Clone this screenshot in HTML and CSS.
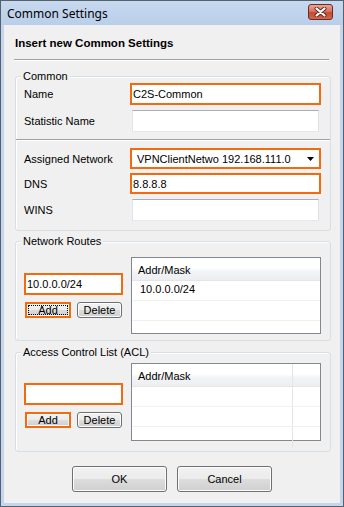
FILE: index.html
```html
<!DOCTYPE html>
<html lang="en">
<head>
    <meta charset="UTF-8">
    <meta name="viewport" content="width=device-width, initial-scale=1.0">
    <title>Common Settings</title>
    <link rel="stylesheet" href="styles.css">
</head>
<body>
    <div class="window">
        <div class="titlebar">
            <span class="title">Common Settings</span>
            <span class="close-btn">
                <svg width="13" height="10" viewBox="0 0 13 10">
                    <path d="M2.5 1.5 L10.5 8.5 M10.5 1.5 L2.5 8.5" stroke="#5a2418" stroke-width="4" stroke-linecap="round"/>
                    <path d="M2.5 1.5 L10.5 8.5 M10.5 1.5 L2.5 8.5" stroke="#ffffff" stroke-width="2.2" stroke-linecap="round"/>
                </svg>
            </span>
        </div>

        <div class="client">
            <div class="heading">Insert new Common Settings</div>
            <div class="separator"></div>

            <div class="group group-main">
                <span class="group-title">Common</span>
                <div class="row">
                    <span class="label">Name</span>
                    <div class="field field-hl">C2S-Common</div>
                </div>
                <div class="row">
                    <span class="label">Statistic Name</span>
                    <div class="field"></div>
                </div>
                <div class="divider"></div>
                <div class="row row-21">
                    <span class="label">Assigned Network</span>
                    <div class="field field-hl select">
                        <span>VPNClientNetwo 192.168.111.0</span>
                        <svg width="7" height="4" viewBox="0 0 7 4"><path d="M0 0 H7 L3.5 4 Z" fill="#000"/></svg>
                    </div>
                </div>
                <div class="row row-21 row-tight">
                    <span class="label">DNS</span>
                    <div class="field field-hl">8.8.8.8</div>
                </div>
                <div class="row">
                    <span class="label">WINS</span>
                    <div class="field"></div>
                </div>
            </div>

            <div class="group group-list group-routes">
                <span class="group-title">Network Routes</span>
                <div class="list-side">
                    <div class="entry">10.0.0.0/24</div>
                    <div class="side-buttons">
                        <button class="btn small-btn btn-hl btn-focus">Add</button>
                        <button class="btn small-btn">Delete</button>
                    </div>
                </div>
                <div class="listview">
                    <div class="lv-head"><span class="lv-col">Addr/Mask</span></div>
                    <div class="lv-row"><span class="lv-cell">10.0.0.0/24</span></div>
                    <div class="lv-row"><span class="lv-cell"></span></div>
                </div>
            </div>

            <div class="group group-list group-acl">
                <span class="group-title">Access Control List (ACL)</span>
                <div class="list-side">
                    <div class="entry"></div>
                    <div class="side-buttons">
                        <button class="btn small-btn btn-hl">Add</button>
                        <button class="btn small-btn">Delete</button>
                    </div>
                </div>
                <div class="listview">
                    <div class="lv-head"><span class="lv-col lv-col-main">Addr/Mask</span><span class="lv-col lv-col-rest"></span></div>
                    <div class="lv-row"><span class="lv-cell lv-col-main"></span><span class="lv-cell lv-col-rest"></span></div>
                    <div class="lv-row"><span class="lv-cell lv-col-main"></span><span class="lv-cell lv-col-rest"></span></div>
                    <div class="lv-row lv-row-last"><span class="lv-cell lv-col-main"></span><span class="lv-cell lv-col-rest"></span></div>
                </div>
            </div>

            <div class="actions">
                <button class="btn dialog-btn">OK</button>
                <button class="btn dialog-btn">Cancel</button>
            </div>
        </div>
    </div>
</body>
</html>
```

FILE: styles.css
```css
body {
    margin: 0;
    font-family: "Liberation Sans", Arial, sans-serif;
    font-size: 11px;
    color: #000;
    background: #fff;
}
.window {
    width: 344px;
    height: 507px;
    box-sizing: border-box;
    border: 1px solid #56616e;
    background: #c3d6ed;
    display: flex;
    flex-direction: column;
}
.titlebar {
    height: 24px;
    flex: none;
    display: flex;
    justify-content: space-between;
    padding: 0 10px 0 6px;
    background: linear-gradient(#c7d9ef, #b9cee9);
}
.title {
    font-family: "Noto Sans", sans-serif;
    font-size: 12px;
    line-height: 16px;
    margin-top: 5px;
}
.close-btn {
    width: 25px;
    height: 16px;
    margin-top: 3px;
    box-sizing: border-box;
    border: 1px solid #6e2b20;
    border-radius: 3px;
    background: linear-gradient(#e9a595 0%, #d8735f 45%, #c54a31 55%, #d3674c 100%);
    display: flex;
    align-items: center;
    justify-content: center;
}
.client {
    flex: 1;
    margin: 0 3px 3px;
    background: #f0f0f0;
}
.heading {
    padding: 11px 0 9px 11px;
    font-weight: bold;
    font-size: 11.5px;
    line-height: 14px;
}
.separator {
    margin: 0 11px 0 10px;
    border-top: 1px solid #a0a0a0;
    border-bottom: 1px solid #fff;
}
.group {
    position: relative;
    margin: 0 9px 0 11px;
    border: 1px solid #d5dfe5;
    border-radius: 3px;
    box-shadow: inset 1px 1px 0 #fff;
}
.group-title {
    position: absolute;
    top: -7px;
    left: 5px;
    padding: 0 2px;
    line-height: 13px;
    background: #f0f0f0;
}
.group-main {
    margin-top: 15px;
    padding: 6px 9px 9px 8px;
}
.row {
    display: flex;
    align-items: center;
    height: 22px;
}
.row + .row {
    margin-top: 5px;
}
.row.row-tight {
    margin-top: 4px;
}
.row-21 {
    height: 21px;
}
.label {
    width: 106px;
    flex: none;
}
.field {
    flex: 1;
    align-self: stretch;
    margin: 0 2px;
    box-sizing: border-box;
    border: 1px solid;
    border-color: #abadb3 #dbdfe6 #e3e9ef #e2e3ea;
    background: #fff;
    line-height: 18px;
}
.field-hl {
    margin: 0;
    border: 2px solid #f5690f;
    padding-left: 1px;
}
.select {
    display: flex;
    align-items: center;
    justify-content: space-between;
    padding: 0 5px 0 5px;
}
.divider {
    margin: 7px -9px 7px -8px;
    border-top: 1px solid #a0a0a0;
    border-bottom: 1px solid #fff;
}
.divider + .row {
    margin-top: 0;
}
.group-list {
    display: flex;
    align-items: flex-start;
    gap: 8px;
}
.group-routes {
    margin-top: 10px;
    padding: 15px 9px 6px 8px;
}
.group-acl {
    margin-top: 11px;
    padding: 10px 9px 10px 8px;
}
.list-side {
    width: 99px;
    flex: none;
}
.group-routes .list-side {
    margin-top: 16px;
}
.group-acl .list-side {
    margin-top: 20px;
}
.entry {
    height: 22px;
    box-sizing: border-box;
    border: 2px solid #f5690f;
    background: #fff;
    line-height: 18px;
    padding-left: 1px;
}
.side-buttons {
    display: flex;
    gap: 6px;
    margin-top: 7px;
    padding-left: 1px;
}
.btn {
    font-family: "Liberation Sans", Arial, sans-serif;
    font-size: 11px;
    color: #000;
    padding: 0;
    box-sizing: border-box;
    border: 1px solid #707070;
    border-radius: 3px;
    background: linear-gradient(#f2f2f2 0%, #ebebeb 50%, #dddddd 51%, #cfcfcf 100%);
    box-shadow: inset 0 0 0 1px #fcfcfc;
}
.small-btn {
    width: 45px;
    height: 16px;
    line-height: 13px;
}
.btn-hl {
    width: 46px;
    border: 2px solid #f5690f;
    border-radius: 0;
    position: relative;
}
.btn-focus::after {
    content: "";
    position: absolute;
    left: 1px;
    right: 1px;
    top: 1px;
    bottom: 1px;
    border: 1px dotted #000;
}
.listview {
    width: 190px;
    flex: none;
    height: 77px;
    box-sizing: border-box;
    border: 1px solid #828790;
    background: #fff;
}
.group-acl .listview {
    height: 78px;
}
.lv-head {
    height: 23px;
    box-sizing: border-box;
    display: flex;
    border-bottom: 1px solid #e5e5e5;
    background: linear-gradient(#ffffff 0%, #ffffff 45%, #f3f4f6 60%, #eceef1 100%);
}
.lv-col {
    padding: 5px 0 0 6px;
    line-height: 14px;
}
.lv-row {
    height: 20px;
    box-sizing: border-box;
    display: flex;
    border-bottom: 1px solid #f0f0f0;
}
.lv-row-last {
    border-bottom: none;
}
.lv-cell {
    padding: 1px 0 0 8px;
    line-height: 14px;
}
.lv-col-main {
    width: 161px;
    flex: none;
    box-sizing: border-box;
    border-right: 1px solid #e5e5e5;
}
.lv-col-rest {
    flex: 1;
}
.actions {
    display: flex;
    justify-content: center;
    gap: 10px;
    margin-top: 14px;
}
.dialog-btn {
    width: 95px;
    height: 26px;
}
```
